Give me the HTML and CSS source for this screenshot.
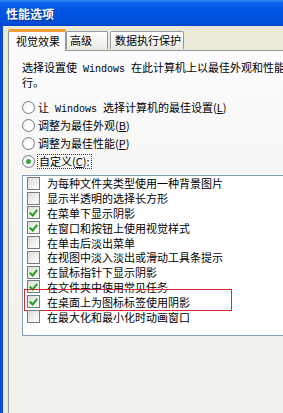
FILE: index.html
```html
<!DOCTYPE html>
<html lang="zh-CN">
<head>
<meta charset="utf-8">
<title>性能选项</title>
<link rel="stylesheet" href="styles.css">
</head>
<body>
<div class="window">
  <div class="titlebar"><span class="title">性能选项</span></div>
  <div class="frame">
    <div class="tabs">
      <div class="tab active">视觉效果</div>
      <div class="tab tab-adv">高级</div>
      <div class="tab tab-dep">数据执行保护</div>
    </div>
    <div class="panel">
      <p class="desc">选择设置使<span class="latin"> Windows </span>在此计算机上以最佳外观和性能运<br>行。</p>
      <div class="radios">
        <div class="radio-row"><span class="radio"></span><span>让<span class="latin"> Windows </span>选择计算机的最佳设置(<u>L</u>)</span></div>
        <div class="radio-row"><span class="radio"></span><span>调整为最佳外观(<u>B</u>)</span></div>
        <div class="radio-row"><span class="radio"></span><span>调整为最佳性能(<u>P</u>)</span></div>
        <div class="radio-row"><span class="radio checked"></span><span class="focus">自定义(<u>C</u>):</span></div>
      </div>
      <div class="listbox">
        <div class="item"><span class="cb"></span><span>为每种文件夹类型使用一种背景图片</span></div>
        <div class="item"><span class="cb"></span><span>显示半透明的选择长方形</span></div>
        <div class="item"><span class="cb on"></span><span>在菜单下显示阴影</span></div>
        <div class="item"><span class="cb on"></span><span>在窗口和按钮上使用视觉样式</span></div>
        <div class="item"><span class="cb"></span><span>在单击后淡出菜单</span></div>
        <div class="item"><span class="cb"></span><span>在视图中淡入淡出或滑动工具条提示</span></div>
        <div class="item"><span class="cb on"></span><span>在鼠标指针下显示阴影</span></div>
        <div class="item"><span class="cb on"></span><span>在文件夹中使用常见任务</span></div>
        <div class="item marked"><span class="cb on"></span><span>在桌面上为图标标签使用阴影</span><span class="redbox"></span></div>
        <div class="item"><span class="cb"></span><span>在最大化和最小化时动画窗口</span></div>
      </div>
    </div>
  </div>
</div>
</body>
</html>
```

FILE: styles.css
```css
html, body {
  margin: 0;
  padding: 0;
  overflow: hidden;
}

body {
  width: 283px;
  height: 413px;
  background: #ece9d8;
  font-family: "Noto Sans CJK SC", "Noto Sans", sans-serif;
  font-size: 11px;
  color: #000;
}

.window {
  width: 340px;
  height: 413px;
  display: flex;
  flex-direction: column;
}

.titlebar {
  height: 26px;
  flex: none;
  background: linear-gradient(#3b8cf5 0px, #0a5fe8 3px, #0054e3 12px, #0050dc 22px, #0046c8 26px);
  display: flex;
  align-items: center;
  padding-left: 6px;
}

.title {
  color: #fff;
  font-weight: bold;
  font-size: 12px;
  text-shadow: 1px 1px 0 #0a2f8c;
}

.frame {
  flex: 1;
  border-left: 3px solid #0a4bd8;
  padding-left: 5px;
  display: flex;
  flex-direction: column;
  background: #ece9d8;
}

.tabs {
  display: flex;
  align-items: flex-end;
  height: 24px;
  flex: none;
  position: relative;
  z-index: 1;
}

.tab {
  box-sizing: border-box;
  white-space: nowrap;
  height: 18px;
  line-height: 16px;
  border: 1px solid #919b9c;
  border-bottom: none;
  border-radius: 2px 2px 0 0;
  background: linear-gradient(#ffffff, #ecebe6);
  margin-bottom: 1px;
}

.tab.active {
  width: 58px;
  height: 22px;
  line-height: 19px;
  padding-left: 7px;
  border-top: 3px solid #f0a030;
  background: #fcfcfe;
  margin-bottom: -1px;
}

.tab-adv {
  width: 42px;
  padding-left: 3px;
}

.tab-dep {
  width: 74px;
  padding-left: 4px;
  margin-left: 2px;
}

.panel {
  flex: 1;
  border: 1px solid #919b9c;
  border-right: none;
  border-bottom: none;
  background: linear-gradient(#fcfcfe, #f4f3ee 60%, #f1f0eb);
  padding: 10px 0 0 13px;
}

.desc {
  margin: 0;
  line-height: 12px;
}

.latin {
  font-family: "Liberation Mono", monospace;
  font-size: 10px;
  white-space: pre;
}

.radios {
  margin-top: 10px;
  display: flex;
  flex-direction: column;
}

.radio-row {
  height: 18px;
  display: flex;
  align-items: center;
  gap: 2px;
}

.radio {
  width: 11px;
  height: 11px;
  border: 1px solid #6f7d8a;
  border-radius: 50%;
  background: radial-gradient(circle at 60% 60%, #ffffff 30%, #e6e6e0 100%);
  position: relative;
  flex: none;
  margin-right: 1px;
}

.radio.checked::after {
  content: "";
  position: absolute;
  left: 3px;
  top: 3px;
  width: 5px;
  height: 5px;
  border-radius: 50%;
  background: #3fa43a;
}

.focus {
  outline: 1px dotted #333;
  padding: 0 1px;
  line-height: 13px;
}

.listbox {
  margin-top: 5px;
  height: 159px;
  border: 1px solid #7f9db9;
  background: #fff;
  padding: 0 0 0 4px;
  display: flex;
  flex-direction: column;
}

.item {
  height: 14.8px;
  flex: none;
  display: flex;
  align-items: center;
  position: relative;
}

.cb {
  width: 11px;
  height: 11px;
  border: 1px solid #6f7d8a;
  background: linear-gradient(135deg, #dcdcd6, #ffffff);
  margin-right: 7px;
  flex: none;
  position: relative;
}

.cb.on::after {
  content: "";
  position: absolute;
  left: 3px;
  top: 1px;
  width: 3px;
  height: 6px;
  border: solid #21a121;
  border-width: 0 2px 2px 0;
  transform: rotate(40deg);
}

.redbox {
  position: absolute;
  left: -3px;
  top: -5px;
  width: 206px;
  height: 20px;
  border: 1px solid #d42b34;
}
```
